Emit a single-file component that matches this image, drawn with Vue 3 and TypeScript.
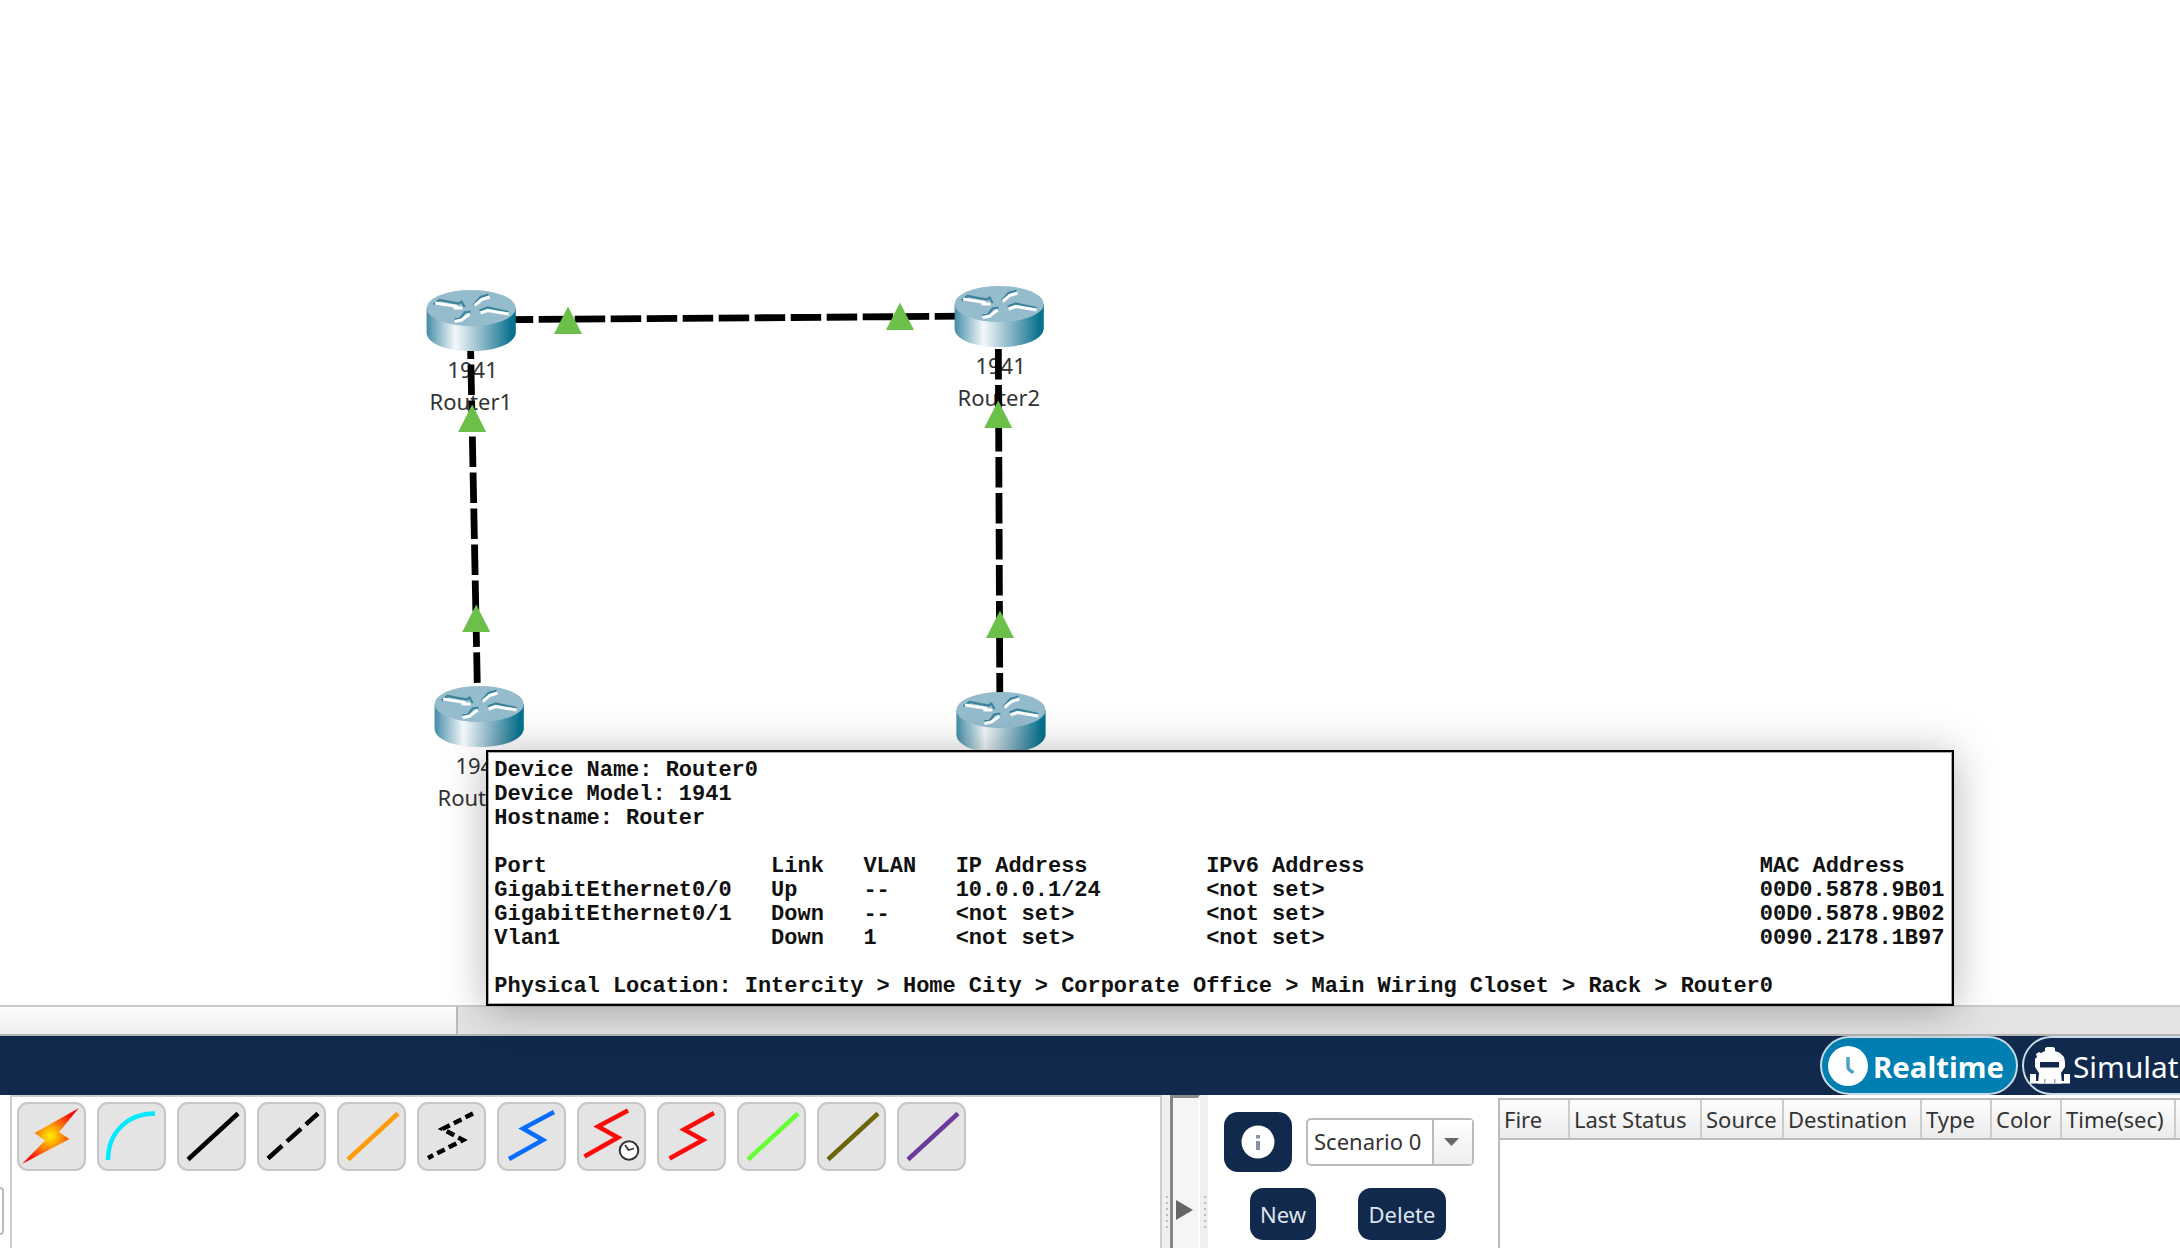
<script setup lang="ts">
interface Point { x: number; y: number }
interface RouterNode extends Point { name: string; model: string }
interface Cable { from: Point; to: Point }

const routers: RouterNode[] = [
  { x: 426.6, y: 290, name: 'Router1', model: '1941' },
  { x: 954.6, y: 286, name: 'Router2', model: '1941' },
  { x: 434.6, y: 686, name: 'Router0', model: '1941' },
  { x: 956.4, y: 692, name: '', model: '' },
]
const cables: Cable[] = [
  { from: { x: 466.7, y: 320 }, to: { x: 990, y: 316 } },
  { from: { x: 470.2, y: 328.5 }, to: { x: 477.6, y: 700 } },
  { from: { x: 998.2, y: 313 }, to: { x: 999.9, y: 720 } },
]
const linkLights: Point[] = [
  { x: 568, y: 334 }, { x: 900, y: 330 }, { x: 472.2, y: 432 },
  { x: 998.2, y: 428 }, { x: 476.2, y: 632 }, { x: 1000, y: 638 },
]

const portRows: string[][] = [
  ['Port', 'Link', 'VLAN', 'IP Address', 'IPv6 Address', 'MAC Address'],
  ['GigabitEthernet0/0', 'Up', '--', '10.0.0.1/24', '<not set>', '00D0.5878.9B01'],
  ['GigabitEthernet0/1', 'Down', '--', '<not set>', '<not set>', '00D0.5878.9B02'],
  ['Vlan1', 'Down', '1', '<not set>', '<not set>', '0090.2178.1B97'],
]
const columnChars = [21, 7, 7, 19, 42, 14]
const tooltip = [
  'Device Name: Router0',
  'Device Model: 1941',
  'Hostname: Router',
  '',
  ...portRows.map((r) => r.map((c, i) => c.padEnd(columnChars[i])).join('')),
  '',
  'Physical Location: Intercity > Home City > Corporate Office > Main Wiring Closet > Rack > Router0',
].join('\n')

interface Tool { name: string; path: string; color: string; dash?: string; clock?: boolean }
const straight = 'M11 57.5 L61 11.5'
const tools: Tool[] = [
  { name: 'auto', path: '', color: '' },
  { name: 'console', path: 'M11 58 C11 30 31 11.5 58 11.5', color: '#00eaff' },
  { name: 'straight', path: straight, color: '#000' },
  { name: 'crossover', path: 'M11 56.5 L61 11.5', color: '#000', dash: '19 6.5' },
  { name: 'fiber', path: straight, color: '#ff9b0a' },
  { name: 'phone', path: 'M56 11.5 L25.5 27 L46 38 L11 56', color: '#000', dash: '8.5 4.5' },
  { name: 'coaxial', path: 'M57 10 L26 26.5 L46 38 L12 57', color: '#0a6cff' },
  { name: 'dce', path: 'M51 8.5 L21 24.5 L41 35.5 L7.5 54.5', color: '#ff0a0a', clock: true },
  { name: 'dte', path: 'M57 11 L27 27.5 L46 38 L12.5 56.5', color: '#ff0a0a' },
  { name: 'octal', path: straight, color: '#66ff33' },
  { name: 'custom', path: straight, color: '#6b660a' },
  { name: 'usb', path: straight, color: '#6c3a9c' },
]

const columns = [
  { label: 'Fire', width: 70 }, { label: 'Last Status', width: 132 },
  { label: 'Source', width: 82 }, { label: 'Destination', width: 138 },
  { label: 'Type', width: 70 }, { label: 'Color', width: 70 },
  { label: 'Time(sec)', width: 114 }, { label: '', width: 90 },
]
</script>

<template>
  <div class="app">
    <section class="workspace">
      <svg class="topology" width="2180" height="1005" viewBox="0 0 2180 1005">
        <defs>
          <linearGradient id="side" x1="0" x2="1" y1="0" y2="0">
            <stop offset="0" stop-color="#3f8ba5" />
            <stop offset="0.06" stop-color="#67a2b7" />
            <stop offset="0.32" stop-color="#f3f8fa" />
            <stop offset="0.42" stop-color="#d3e3ea" />
            <stop offset="0.72" stop-color="#66a2b6" />
            <stop offset="0.95" stop-color="#08748f" />
            <stop offset="1" stop-color="#026f8b" />
          </linearGradient>
          <g id="router">
            <path d="M0 18 V43 C1 54 20 61 44.6 61 S88 54 89.2 43 V18 Z" fill="url(#side)" />
            <ellipse cx="44.6" cy="18" rx="44.6" ry="18" fill="#94bccd" />
            <g fill="none" stroke="#3d8399" stroke-width="2.2">
              <path d="M7 14.500 L13 10 L32 13.500 L35 11.500 L38 17" />
              <path d="M47 15 L54 7 L62 4.500" />
              <path d="M53 20.500 L61 17.500 L82 22" />
              <path d="M28 29 H33 L38 22.500 L44 21.500" />
            </g>
            <g fill="none" stroke="#fff" stroke-width="3">
              <path d="M8.500 13 L31 16.500 M27 18 H36" />
              <path d="M48 15.500 L55 9.500 L63 7" />
              <path d="M54 23 L61 20.500 L82 24" />
              <path d="M28 31.500 L35 30 L43 24" />
            </g>
          </g>
        </defs>
        <g class="labels">
          <template v-for="r in routers" :key="r.x">
            <text v-if="r.model" :x="r.x + 46" :y="r.y + 87.7">{{ r.model }}</text>
            <text v-if="r.name" :x="r.x + 44.2" :y="r.y + 119.7">{{ r.name }}</text>
          </template>
        </g>
        <line v-for="(c, i) in cables" :key="i" class="cable" :x1="c.from.x" :y1="c.from.y" :x2="c.to.x" :y2="c.to.y" />
        <use v-for="r in routers" :key="r.x" href="#router" :x="r.x" :y="r.y" />
        <path v-for="(t, i) in linkLights" :key="i" :d="`M${t.x} ${t.y - 27.5} l14 27.5 h-28 Z`" fill="#6cc04a" />
      </svg>
      <pre class="tooltip">{{ tooltip }}</pre>
    </section>

    <div class="scrollbar"><div class="thumb"></div></div>

    <nav class="modes">
      <div class="mode active">
        <svg width="40" height="40" viewBox="0 0 40 40"><circle cx="20" cy="20" r="20" fill="#fff" /><path d="M20 11 V21 Q20 24 25.500 26.500" fill="none" stroke="#4b9fc4" stroke-width="3.4" /></svg>
        <span>Realtime</span>
      </div>
      <div class="mode sim">
        <svg width="40" height="37" viewBox="0 0 40 37">
          <path fill="#fff" fill-rule="evenodd" d="M15 1 L17 0 H23 L25 1 V4 L30 6 L34 10 L35 15 V20 L31 26 L32 36.500 H8 L9 26 L5 20 V12 L7 10 L6 7 L9 5 L11 6 L15 4 Z M10 15 V20.500 H29 V15 Z" />
          <path fill="#fff" d="M0 27 H6 V36.500 H0 Z M34 27 H40 V36.500 H34 Z M6 34 H34 V36.500 H6 Z" />
          <path fill="#9aa5b6" d="M14 32 h1.500 v4 h-1.500 Z M24 32 h1.500 v4 h-1.500 Z" />
        </svg>
        <span>Simulation</span>
      </div>
    </nav>

    <footer class="bottom">
      <div class="edge"><i></i></div>
      <div class="tools">
        <button v-for="t in tools" :key="t.name" class="tool">
          <svg width="69" height="69" viewBox="0 0 69 69">
            <defs v-if="!t.path">
              <radialGradient id="bolt" gradientUnits="userSpaceOnUse" cx="33" cy="34" r="29">
                <stop offset="0" stop-color="#fff000" /><stop offset="0.5" stop-color="#ff7a0a" /><stop offset="1" stop-color="#f80d0d" />
              </radialGradient>
            </defs>
            <path v-if="!t.path" d="M62 6 L17.500 31 L28 38.500 L5 62 L52.500 37 L42 30 Z" fill="url(#bolt)" />
            <path v-else :d="t.path" fill="none" :stroke="t.color" stroke-width="4.500" :stroke-dasharray="t.dash" />
            <g v-if="t.clock" fill="none" stroke="#333">
              <circle cx="52" cy="48.500" r="9.300" fill="#fff" stroke-width="2" />
              <path d="M48 43 L51.500 48 L57 46.500" stroke-width="1.800" />
            </g>
          </svg>
        </button>
      </div>
      <div class="splitter"><i v-for="n in 6" :key="n"></i></div>
      <div class="collapse"><svg width="17" height="20" viewBox="0 0 17 20"><path d="M0 0 L17 10 L0 20 Z" fill="#666" /></svg></div>
      <div class="splitter"><i v-for="n in 6" :key="n"></i></div>
      <div class="scenario">
        <div class="row">
          <button class="info"><svg width="34" height="34" viewBox="0 0 34 34"><circle cx="17" cy="17" r="16.500" fill="#fff" /><path d="M15 10 h4 v3.500 h-4 Z M15 16 h4 v9 h-4 Z" fill="#8792a6" /></svg></button>
          <div class="select"><span>Scenario 0</span><div class="arrow"><svg width="15" height="8" viewBox="0 0 15 8"><path d="M0 0 H15 L7.500 8 Z" fill="#666" /></svg></div></div>
        </div>
        <div class="row actions"><button class="new">New</button><button class="delete">Delete</button></div>
      </div>
      <div class="events">
        <div class="head"><div v-for="c in columns" :key="c.label" class="cell" :style="{ width: c.width + 'px' }">{{ c.label }}</div></div>
      </div>
    </footer>
  </div>
</template>

<style>
html, body { overflow: hidden; background: #fff; }
</style>

<style scoped>
.app { width: 2180px; height: 1248px; overflow: hidden; display: flex; flex-direction: column; background: #fff; color: #333; font: 22px "Noto Sans", sans-serif; }
.app * { box-sizing: border-box; }
button { border: 0; margin: 0; padding: 0; font: inherit; flex: none; }
svg { display: block; flex: none; }
.workspace { position: relative; height: 1005px; flex: none; z-index: 1; }
.labels { font-size: 22px; fill: #333; text-anchor: middle; }
.cable { stroke: #000; stroke-width: 6.8; stroke-dasharray: 30.5 5.5; }
.tooltip { position: absolute; left: 486px; top: 750px; width: 1468px; height: 256px; margin: 0; padding: 7px 0 0 6.3px; border: 2px solid #000; background: #fff; color: #111; font: bold 22px/24px "Liberation Mono", monospace; letter-spacing: -0.02px; box-shadow: inset 0 0 0 1px #aaa, 0 4px 40px rgba(0, 0, 0, .3); }
.scrollbar { height: 31px; flex: none; background: #e3e3e3; border-top: 2px solid #ccc; border-bottom: 2px solid #b4b4b4; }
.thumb { width: 458px; height: 100%; background: linear-gradient(#fdfdfd, #f0f0f0); border-right: 2px solid #bbb; }
.modes { height: 59px; flex: none; background: #10294d; display: flex; gap: 4px; padding-left: 1820px; color: #fff; font-size: 29.4px; }
.mode { display: flex; align-items: center; height: 59px; border: 2px solid #c9dbe6; border-radius: 30px; padding-left: 6px; gap: 5px; flex: none; }
.mode span { padding-top: 2px; }
.active { width: 198px; background: #0080b2; font-weight: bold; }
.sim { width: 260px; font-size: 29.8px; gap: 3px; }
.bottom { flex: 1; display: flex; }
.edge { width: 10px; padding-top: 92px; }
.edge i { display: block; width: 4px; height: 48px; border: 2px solid #bbb; border-left: 0; border-radius: 0 6px 6px 0; }
.tools { width: 1152px; border: 2px solid #ccc; border-bottom: 0; padding: 5px 0 0 5px; display: flex; gap: 11px; align-items: flex-start; }
.tool { width: 69px; height: 69px; border-radius: 11px; background: #e4e4e4; box-shadow: inset 0 0 0 2px #c6c6c6; }
.splitter { width: 8px; background: #efefef; padding: 101px 0 0 4px; display: flex; flex-direction: column; gap: 4px; }
.splitter i { width: 2px; height: 2px; background: #bbb; }
.collapse { width: 30px; border-left: 3px solid #858585; border-top: 3px solid #8a8a8a; border-right: 2px solid #fff; padding: 102px 0 0 3px; background: #f5f5f5; }
.scenario { width: 290px; padding: 17px 0 0 16px; }
.row { display: flex; align-items: flex-start; }
.info { width: 68px; height: 60px; border-radius: 14px; background: #10294d; display: flex; align-items: center; justify-content: center; }
.select { margin: 6px 0 0 14px; width: 168px; height: 48px; border: 2px solid #bbb; border-radius: 5px; display: flex; }
.select span { width: 124px; padding-left: 6px; line-height: 43px; white-space: nowrap; }
.arrow { flex: 1; border-left: 2px solid #bbb; background: linear-gradient(#fff, #eee); display: flex; align-items: center; justify-content: center; padding-right: 4px; }
.actions { margin-top: 16px; padding-left: 26px; gap: 42px; }
.actions button { height: 52px; border-radius: 13px; background: #10294d; color: #dfe4ec; }
.new { width: 66px; } .delete { width: 88px; }
.events { margin-top: 3px; border-left: 2px solid #bbb; border-top: 2px solid #bbb; flex: 1; overflow: hidden; }
.head { display: flex; height: 40px; border-bottom: 2px solid #bbb; background: linear-gradient(#fdfdfd, #ebebeb); }
.cell { flex: none; border-right: 2px solid #ccc; padding-left: 4px; line-height: 39px; white-space: nowrap; }
</style>
